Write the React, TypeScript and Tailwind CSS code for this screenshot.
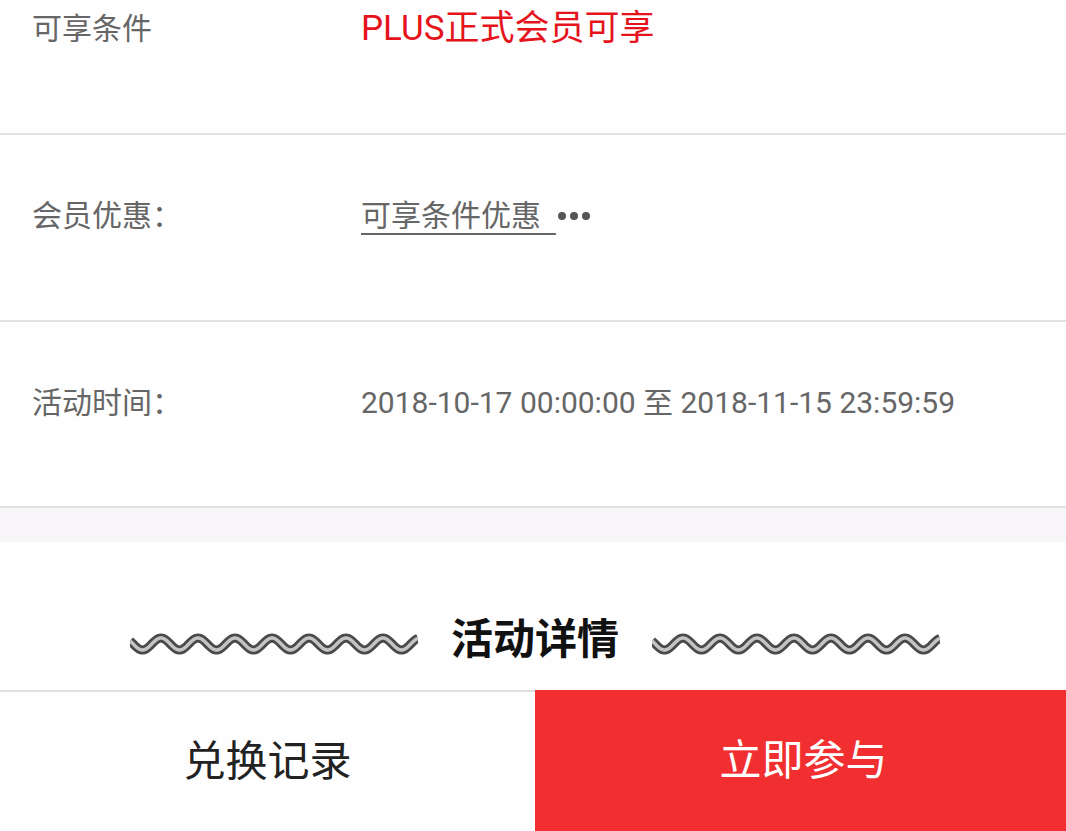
import React from "react";

function Wave() {
  const w = 288;
  const period = 37;
  const amp = 6;
  const cy = 12;
  let d = "";
  const phase = -6;
  for (let x = 0; x <= w; x += 1) {
    const y = cy - amp * Math.cos(((x - phase) / period) * 2 * Math.PI);
    d += (x === 0 ? "M" : "L") + x + " " + y.toFixed(2) + " ";
  }
  return (
    <svg width={w} height={24} viewBox={`0 0 ${w} 24`} className="block">
      <path d={d} fill="none" stroke="#4a4a4a" strokeWidth={9} />
      <path d={d} fill="none" stroke="#c4c4c4" strokeWidth={3.5} />
    </svg>
  );
}

function Row({
  label,
  children,
  className,
}: {
  label: string;
  children: React.ReactNode;
  className: string;
}) {
  return (
    <div className={`flex shrink-0 border-b-2 border-[#e3e3e3] pl-[32px] ${className}`}>
      <div className="w-[329px] shrink-0 text-[30px] leading-[36px] text-[#666666]">{label}</div>
      <div className="text-[30px] leading-[36px]">{children}</div>
    </div>
  );
}

export default function App() {
  return (
    <div
      className="flex h-[831px] w-full flex-col overflow-hidden bg-[#fefefe]"
      style={{ fontFamily: 'Roboto, "Noto Sans CJK SC", sans-serif' }}
    >
      <Row label="可享条件" className="-mt-[54px] h-[189px] pt-[65px]">
        <span className="-mt-[1px] block text-[35px] leading-[38px] text-[#e5141c]">PLUS正式会员可享</span>
      </Row>
      <Row label="会员优惠：" className="h-[187px] pt-[63px]">
        <span className="inline-flex items-center">
          <span className="whitespace-pre text-[#666666] underline decoration-[#666666] decoration-2 underline-offset-[7px]">
            {"可享条件优惠  "}
          </span>
          <span className="ml-[2px] flex items-center gap-[4px]">
            <span className="h-[8px] w-[8px] rounded-full bg-[#555555]" />
            <span className="h-[8px] w-[8px] rounded-full bg-[#555555]" />
            <span className="h-[8px] w-[8px] rounded-full bg-[#555555]" />
          </span>
        </span>
      </Row>
      <Row label="活动时间：" className="h-[186px] pt-[63px]">
        <span className="text-[#666666]">2018-10-17 00:00:00 至 2018-11-15 23:59:59</span>
      </Row>
      <div className="h-[34px] shrink-0 bg-[#f8f6f9]" />
      <div className="flex h-[148px] shrink-0 items-center justify-center pl-[4px] pt-[48px]">
        <div className="mt-[8px]">
          <Wave />
        </div>
        <div className="mx-[33px] text-[42px] font-bold leading-[50px] text-[#111111]">活动详情</div>
        <div className="mt-[8px]">
          <Wave />
        </div>
      </div>
      <div className="flex h-[141px] shrink-0">
        <div className="flex w-[535px] items-center justify-center border-t-2 border-[#e0e0e0] text-[42px] text-[#222222]">
          兑换记录
        </div>
        <div className="flex flex-1 items-center justify-center bg-[#f12f30] pl-[6px] text-[42px] text-white">
          立即参与
        </div>
      </div>
    </div>
  );
}
